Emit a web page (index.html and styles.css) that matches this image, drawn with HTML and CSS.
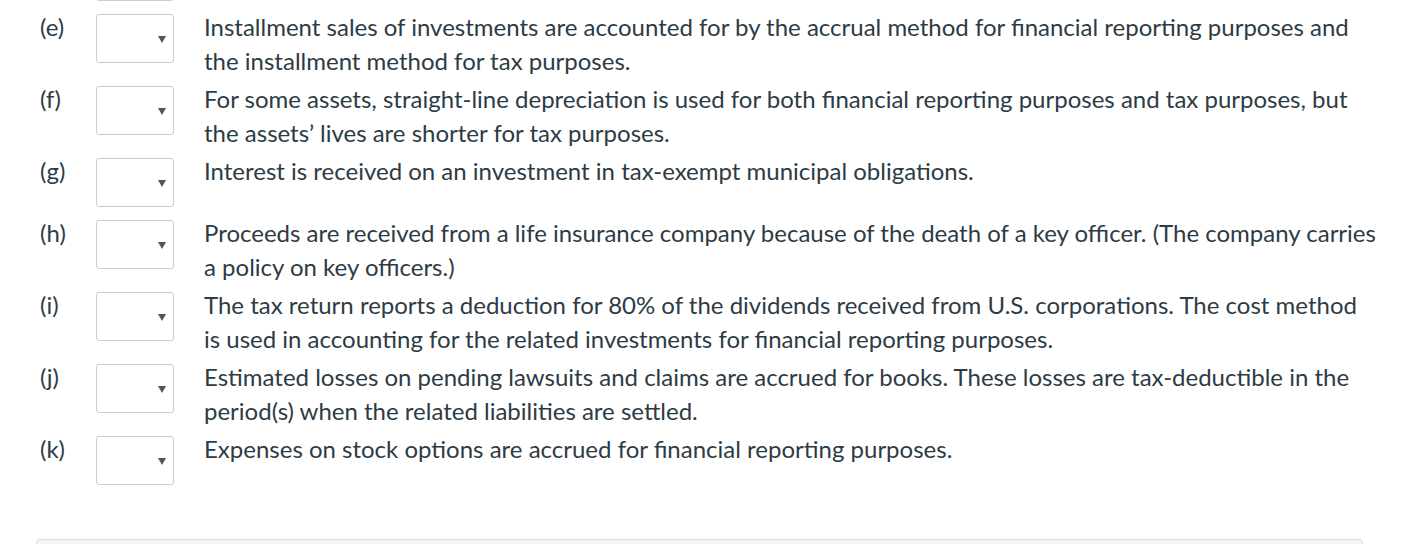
FILE: index.html
```html
<!DOCTYPE html>
<html>
<head>
<meta charset="utf-8">
<link rel="stylesheet" href="styles.css">
</head>
<body>
<div class="page">
  <div class="rows">
    <div class="row top-stub">
      <div class="label"></div>
      <div class="cell-select"><div class="select"></div></div>
      <div class="text"></div>
    </div>
    <div class="row">
      <div class="label">(e)</div>
      <div class="cell-select"><div class="select"><span class="caret"></span></div></div>
      <div class="text">Installment sales of investments are accounted for by the accrual method for financial reporting purposes and the installment method for tax purposes.</div>
    </div>
    <div class="row">
      <div class="label">(f)</div>
      <div class="cell-select"><div class="select"><span class="caret"></span></div></div>
      <div class="text">For some assets, straight-line depreciation is used for both financial reporting purposes and tax purposes, but the assets’ lives are shorter for tax purposes.</div>
    </div>
    <div class="row">
      <div class="label">(g)</div>
      <div class="cell-select"><div class="select"><span class="caret"></span></div></div>
      <div class="text">Interest is received on an investment in tax-exempt municipal obligations.</div>
    </div>
    <div class="row">
      <div class="label">(h)</div>
      <div class="cell-select"><div class="select"><span class="caret"></span></div></div>
      <div class="text">Proceeds are received from a life insurance company because of the death of a key officer. (The company carries a policy on key officers.)</div>
    </div>
    <div class="row">
      <div class="label">(i)</div>
      <div class="cell-select"><div class="select"><span class="caret"></span></div></div>
      <div class="text">The tax return reports a deduction for 80% of the dividends received from U.S. corporations. The cost method<br>is used in accounting for the related investments for financial reporting purposes.</div>
    </div>
    <div class="row">
      <div class="label">(j)</div>
      <div class="cell-select"><div class="select"><span class="caret"></span></div></div>
      <div class="text">Estimated losses on pending lawsuits and claims are accrued for books. These losses are tax-deductible in the period(s) when the related liabilities are settled.</div>
    </div>
    <div class="row">
      <div class="label">(k)</div>
      <div class="cell-select"><div class="select"><span class="caret"></span></div></div>
      <div class="text">Expenses on stock options are accrued for financial reporting purposes.</div>
    </div>
  </div>
  <div class="panel"></div>
</div>
</body>
</html>
```
FILE: styles.css
```css
html, body {
  margin: 0;
  padding: 0;
  background: #ffffff;
}
body {
  font-family: Lato, "Open Sans", sans-serif;
  color: #2d3b45;
  font-size: 24px;
}
.page {
  width: 1414px;
  height: 544px;
  overflow: hidden;
  position: relative;
}
.rows {
  display: flex;
  flex-direction: column;
  margin-top: -54px;
}
.row {
  display: flex;
  align-items: flex-start;
  padding: 2px 0;
}
.label {
  width: 56px;
  margin-left: 40px;
  line-height: 34px;
  flex: none;
}
.cell-select {
  width: 108px;
  flex: none;
  padding-top: 4px;
  padding-bottom: 5px;
}
.select {
  width: 76px;
  height: 47px;
  border: 1px solid #c8cdd0;
  border-radius: 3px;
  box-sizing: content-box;
  position: relative;
  background: #fff;
}
.caret {
  position: absolute;
  left: 61px;
  top: 21px;
  width: 0;
  height: 0;
  border-left: 4px solid transparent;
  border-right: 4px solid transparent;
  border-top: 7px solid #555;
}
.text {
  width: 1183px;
  line-height: 34px;
  flex: none;
}
.top-stub .text { height: 34px; }
.panel {
  position: absolute;
  left: 36px;
  top: 539px;
  width: 1325px;
  height: 40px;
  background: #f5f5f5;
  border: 1px solid #ddd;
  border-radius: 4px;
}
```
